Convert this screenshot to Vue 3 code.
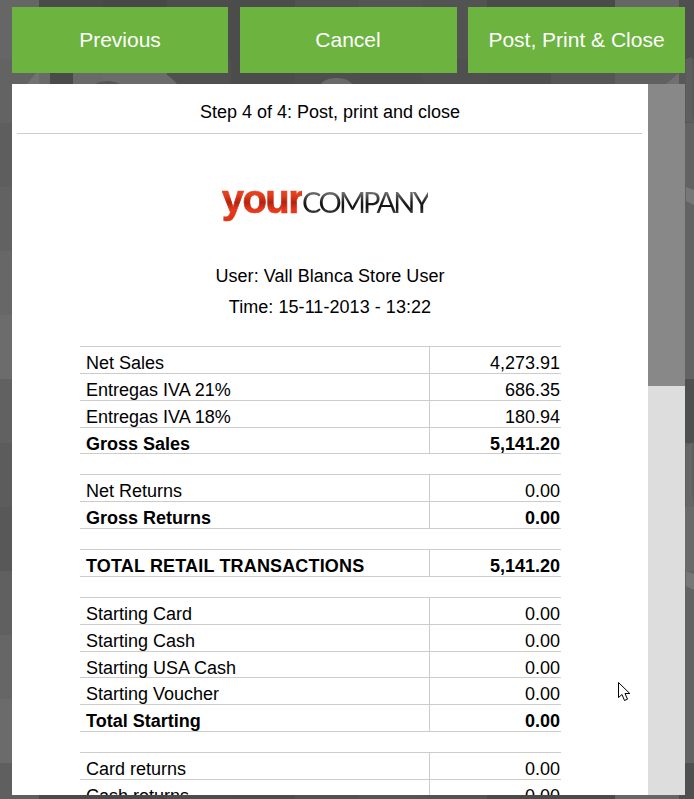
<script setup>
const colX = [39, 103, 167, 231, 295, 359, 423, 487, 551, 615]
const topCols = ['#4a4a4a', '#484848', '#4d4d4d', '#4c4c4c', '#525252', '#555555', '#535353', '#4a4a4a', '#4a4a4a', '#666666']
const midCols = ['#6a6a6a', '#6c6c6c', '#505050', '#4c4c4c', '#4f4f4f', '#4e4e4e', '#505050', '#4f4f4f', '#565656', '#606060']
const tiles = []
colX.forEach((x, i) => {
  tiles.push({ x, y: -5, w: 64, h: 64, c: topCols[i] })
  tiles.push({ x, y: 59, w: 64, h: 64, c: midCols[i] })
  tiles.push({ x, y: 763, w: 64, h: 64, c: topCols[i] })
})
const leftCols = ['#666666', '#636363', '#5e5e5e', '#626262', '#676767', '#6c6c6c', '#616161', '#5c5c5c', '#585858', '#606060', '#666666', '#6b6b6b', '#5f5f5f']
leftCols.forEach((c, i) => tiles.push({ x: -25, y: -5 + i * 64, w: 64, h: 64, c }))
const rightCols = ['#4f4f4f', '#585858', '#626262', '#636363', '#636363', '#636363', '#4f4f4f', '#5e5e5e', '#6a6a6a', '#636363', '#636363', '#636363', '#4f4f4f']
rightCols.forEach((c, i) => tiles.push({ x: 679, y: -5 + i * 64, w: 64, h: 64, c }))

const groups = [
  [
    { label: 'Net Sales', value: '4,273.91' },
    { label: 'Entregas IVA 21%', value: '686.35' },
    { label: 'Entregas IVA 18%', value: '180.94' },
    { label: 'Gross Sales', value: '5,141.20', bold: true, short: true }
  ],
  [
    { label: 'Net Returns', value: '0.00' },
    { label: 'Gross Returns', value: '0.00', bold: true }
  ],
  [{ label: 'TOTAL RETAIL TRANSACTIONS', value: '5,141.20', bold: true, wide: true }],
  [
    { label: 'Starting Card', value: '0.00' },
    { label: 'Starting Cash', value: '0.00' },
    { label: 'Starting USA Cash', value: '0.00', short: true },
    { label: 'Starting Voucher', value: '0.00' },
    { label: 'Total Starting', value: '0.00', bold: true }
  ],
  [
    { label: 'Card returns', value: '0.00' },
    { label: 'Cash returns', value: '0.00' }
  ]
]
</script>

<template>
  <div class="screen">
    <svg class="backdrop" width="694" height="799" viewBox="0 0 694 799" aria-hidden="true">
      <rect v-for="(t, i) in tiles" :key="i" :x="t.x" :y="t.y" :width="t.w" :height="t.h" :fill="t.c" />
      <path d="M27 84L36 73H39V84Z" fill="#727272" />
      <rect x="50" y="73" width="23" height="11" fill="#4a4a4a" />
      <path d="M95 84C102 80 112 80 120 84Z" fill="#555555" />
      <path d="M164 73C170 77 174 80 177 84H164Z" fill="#6c6c6c" />
      <path d="M321 84C326 76 347 76 352 84Z" fill="#6a6a6a" />
      <path d="M666 84L679 73V84Z" fill="#707070" />
      <path d="M679 73H694V84H679Z" fill="#585858" />
      <path d="M686 187L694 190V205L686 201Z" fill="#777777" />
      <path d="M686 571L694 574V590L686 586Z" fill="#777777" />
      <path d="M686 59L692 57V110L694 122H686Z" fill="#5e5e5e" />
      <path d="M686 446L692 443V495L694 507H686Z" fill="#666666" />
    </svg>

    <div class="content">
      <div class="actions">
        <button class="action">Previous</button>
        <button class="action">Cancel</button>
        <button class="action">Post, Print &amp; Close</button>
      </div>

      <div class="sheet">
        <div class="panel">
          <div class="step">Step 4 of 4: Post, print and close</div>

          <div class="logo">
            <span class="logo-your">your</span><span class="logo-company">COMPANY</span>
          </div>

          <div class="meta">
            <div>User: Vall Blanca Store User</div>
            <div>Time: 15-11-2013 - 13:22</div>
          </div>

          <div class="report">
            <div v-for="(group, g) in groups" :key="g" class="group">
              <div
                v-for="row in group"
                :key="row.label"
                class="row"
                :class="{ bold: row.bold, short: row.short, wide: row.wide }"
              >
                <span class="label">{{ row.label }}</span>
                <span class="value">{{ row.value }}</span>
              </div>
            </div>
          </div>
        </div>

        <div class="scrollbar"><div class="thumb"></div></div>
      </div>
    </div>

    <svg class="cursor" width="14" height="20" viewBox="0 0 14 20" aria-hidden="true">
      <path d="M0.5 0.5V15.5L4 12.5L6.5 18.5L9.5 17.2L7 11.5H11.8Z" fill="#ffffff" stroke="#000000" stroke-width="1" />
    </svg>
  </div>
</template>

<style scoped>
.screen {
  position: relative;
  width: 694px;
  height: 799px;
  overflow: hidden;
  font-family: "Liberation Sans", Arial, sans-serif;
  color: #000;
}
.backdrop {
  position: absolute;
  left: 0;
  top: 0;
}
.content {
  position: relative;
  display: flex;
  flex-direction: column;
  gap: 11px;
  padding: 7px 0 0 12px;
}
.actions {
  display: grid;
  grid-template-columns: 216px 217px 217px;
  column-gap: 11.5px;
}
.action {
  height: 66px;
  padding: 0;
  border: 0;
  background: #6cb33f;
  color: #fff;
  font: 21px "Liberation Sans", Arial, sans-serif;
}
.sheet {
  display: flex;
  width: 673px;
  height: 711px;
}
.panel {
  width: 636px;
  background: #fff;
  overflow: hidden;
}
.scrollbar {
  width: 37px;
  background: #ddd;
}
.thumb {
  height: 302px;
  background: #888;
}
.step {
  height: 49px;
  line-height: 57px;
  margin: 0 6px 0 5px;
  padding-left: 1px;
  border-bottom: 1px solid #ccc;
  font-size: 18px;
  text-align: center;
  box-sizing: content-box;
}
.logo {
  display: flex;
  justify-content: center;
  align-items: baseline;
  height: 47px;
  margin-top: 42px;
  padding-right: 10px;
  line-height: 47px;
}
.logo-your {
  font-size: 40px;
  font-weight: 700;
  letter-spacing: -1.6px;
  -webkit-text-stroke: 0.7px transparent;
  background: linear-gradient(#f0694a 0%, #e23a18 42%, #b4220f 56%, #e5391a 72%, #dd3315 100%);
  -webkit-background-clip: text;
  background-clip: text;
  color: transparent;
}
.logo-company {
  font-family: "Lato", "Liberation Sans", sans-serif;
  font-size: 29px;
  font-weight: 400;
  letter-spacing: -2.7px;
  background: linear-gradient(#9a9a9a 20%, #1c1c1c 52%, #111 62%, #666 85%);
  -webkit-background-clip: text;
  background-clip: text;
  color: transparent;
}
.meta {
  margin-top: 38px;
  font-size: 18px;
  line-height: 31px;
  letter-spacing: 0.05px;
  text-align: center;
}
.report {
  display: flex;
  flex-direction: column;
  gap: 20px;
  width: 481px;
  margin: 23px 0 0 68px;
}
.group {
  border-top: 1px solid #ccc;
}
.row {
  display: grid;
  grid-template-columns: 349px 132px;
  grid-template-rows: minmax(0, 1fr);
  height: 27px;
  box-sizing: border-box;
  border-bottom: 1px solid #ccc;
  font-size: 18px;
  line-height: 32px;
}
.row.short {
  height: 26px;
}
.row.bold {
  font-weight: 700;
}
.row.wide .label {
  letter-spacing: 0.16px;
}
.label {
  padding-left: 6px;
  white-space: nowrap;
}
.value {
  padding-right: 1px;
  border-left: 1px solid #ccc;
  text-align: right;
}
.cursor {
  position: absolute;
  left: 618px;
  top: 682px;
}
</style>
